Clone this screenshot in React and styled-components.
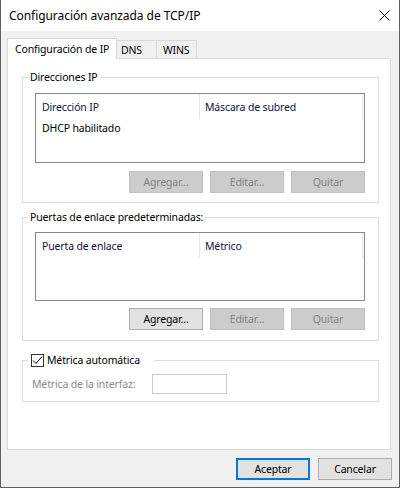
import React from 'react';
import styled, { createGlobalStyle } from 'styled-components';

const Global = createGlobalStyle`
  html, body { margin: 0; padding: 0; background: #f0f0f0; }
  body { font-family: "Noto Sans", Lato, sans-serif; font-size: 10.5px; letter-spacing: -0.15px; color: #000; }
  * { box-sizing: border-box; }
`;

const Window = styled.div`
  width: 400px;
  height: 488px;
  display: flex;
  flex-direction: column;
  border: 1px solid #5f5f5f;
  border-top: none;
  background: #f0f0f0;
`;

const TitleBar = styled.div`
  height: 31px;
  flex: none;
  background: #fff;
  display: flex;
  align-items: center;
  justify-content: space-between;
  padding: 0 9px 0 8px;
`;

const Title = styled.span`
  font-size: 12px;
  letter-spacing: -0.06px;
  line-height: 16px;
`;

const CloseIcon = styled.svg`
  display: block;
  width: 11px;
  height: 11px;
`;

const Body = styled.div`
  flex: 1;
  display: flex;
  flex-direction: column;
  padding: 7px 8px 0 6px;
`;

const TabRow = styled.div`
  display: flex;
  align-items: flex-end;
  height: 21px;
  flex: none;
`;

const Tab = styled.div`
  height: ${p => (p.$active ? 21 : 19)}px;
  width: ${p => p.$w}px;
  border: 1px solid #d9d9d9;
  border-left: ${p => (p.$first ? '1px solid #d9d9d9' : 'none')};
  border-bottom: ${p => (p.$active ? 'none' : '1px solid #d9d9d9')};
  background: ${p => (p.$active ? '#fff' : '#f0f0f0')};
  display: flex;
  align-items: center;
  padding-left: ${p => p.$pl}px;
  line-height: 16px;
  white-space: nowrap;
`;

const TabFiller = styled.div`
  flex: 1;
  height: 1px;
  background: #d9d9d9;
`;

const Panel = styled.div`
  flex: 1;
  background: #fff;
  border: 1px solid #d9d9d9;
  border-top: none;
  padding: 10px 11px 0 14px;
  display: flex;
  flex-direction: column;
`;

const Group = styled.fieldset`
  margin: ${p => p.$mt || 0}px 0 0 0;
  padding: 0;
  border: 1px solid #dcdcdc;
  min-width: 0;
`;

const Legend = styled.legend`
  margin-left: 5px;
  padding: 0 2px;
  line-height: 16px;
  height: 16px;
`;

const CheckLegend = styled.legend`
  margin-left: 5px;
  padding: 0 14px 0 3px;
  line-height: 16px;
  height: 16px;
  display: flex;
  align-items: center;
  gap: 3px;
`;

const CheckBox = styled.span`
  width: 13px;
  height: 13px;
  border: 1px solid #333;
  background: #fff;
  display: flex;
  align-items: center;
  justify-content: center;
`;

const GroupBody = styled.div`
  padding: ${p => p.$pt}px 13px ${p => p.$pb}px 12px;
`;

const ListView = styled.div`
  height: ${p => p.$h}px;
  border: 1px solid #828790;
  background: #fff;
`;

const ListHeader = styled.div`
  display: grid;
  grid-template-columns: 164px 163px 1fr;
  height: 25px;
`;

const HeaderCell = styled.div`
  padding-left: ${p => p.$pl}px;
  border-right: ${p => (p.$last ? 'none' : '1px solid #e5e5e5')};
  display: flex;
  align-items: center;
  color: #10143a;
  white-space: nowrap;
`;

const ListRow = styled.div`
  height: 19px;
  line-height: 19px;
  padding-left: 6px;
`;

const ButtonRow = styled.div`
  display: flex;
  justify-content: flex-end;
  gap: 7px;
  margin-top: ${p => p.$gap}px;
`;

const Button = styled.button`
  width: 74px;
  height: 22px;
  padding: 0;
  font: inherit;
  letter-spacing: inherit;
  background: #e1e1e1;
  color: #000;
  border: 1px solid #adadad;
  &:disabled {
    background: #cccccc;
    border-color: #bfbfbf;
    color: #838383;
  }
`;

const DefaultButton = styled(Button)`
  border: 2px solid #0078d7;
`;

const MetricRow = styled.div`
  display: flex;
  align-items: center;
  padding: 6px 0 7px 9px;
`;

const MetricLabel = styled.span`
  width: 120px;
  color: #8a8a8a;
  white-space: nowrap;
`;

const MetricInput = styled.div`
  width: 75px;
  height: 20px;
  border: 1px solid #cccccc;
  background: #fff;
`;

const Footer = styled.div`
  height: 37px;
  flex: none;
  display: flex;
  justify-content: flex-end;
  align-items: flex-start;
  gap: 8px;
  padding-top: 8px;
  margin-right: -1px;
`;

const AddressList = ({ h, cols, rows }) => (
  <ListView $h={h}>
    <ListHeader>
      <HeaderCell $pl={6}>{cols[0]}</HeaderCell>
      <HeaderCell $pl={5}>{cols[1]}</HeaderCell>
      <HeaderCell $last />
    </ListHeader>
    {rows.map(r => (
      <ListRow key={r}>{r}</ListRow>
    ))}
  </ListView>
);

const Buttons = ({ gap, addEnabled }) => (
  <ButtonRow $gap={gap}>
    <Button disabled={!addEnabled}>Agregar...</Button>
    <Button disabled>Editar...</Button>
    <Button disabled>Quitar</Button>
  </ButtonRow>
);

export default function App() {
  return (
    <>
      <Global />
      <Window>
        <TitleBar>
          <Title>Configuración avanzada de TCP/IP</Title>
          <CloseIcon viewBox="0 0 11 11">
            <path d="M0.5 0.5 L10.5 10.5 M10.5 0.5 L0.5 10.5" stroke="#000" strokeWidth="1" fill="none" />
          </CloseIcon>
        </TitleBar>
        <Body>
          <TabRow>
            <Tab $active $first $w={110} $pl={7}>Configuración de IP</Tab>
            <Tab $w={40} $pl={4}>DNS</Tab>
            <Tab $w={40} $pl={6}>WINS</Tab>
            <TabFiller />
          </TabRow>
          <Panel>
            <Group>
              <Legend>Direcciones IP</Legend>
              <GroupBody $pt={8} $pb={9}>
                <AddressList h={70} cols={['Dirección IP', 'Máscara de subred']} rows={['DHCP habilitado']} />
                <Buttons gap={8} />
              </GroupBody>
            </Group>
            <Group $mt={6}>
              <Legend>Puertas de enlace predeterminadas:</Legend>
              <GroupBody $pt={7} $pb={10}>
                <AddressList h={69} cols={['Puerta de enlace', 'Métrico']} rows={[]} />
                <Buttons gap={7} addEnabled />
              </GroupBody>
            </Group>
            <Group $mt={11}>
              <CheckLegend>
                <CheckBox>
                  <svg width="11" height="11" viewBox="0 0 11 11">
                    <path d="M1 5.5 L4 8.5 L10 1.5" stroke="#000" strokeWidth="1" fill="none" />
                  </svg>
                </CheckBox>
                Métrica automática
              </CheckLegend>
              <MetricRow>
                <MetricLabel>Métrica de la interfaz:</MetricLabel>
                <MetricInput />
              </MetricRow>
            </Group>
          </Panel>
          <Footer>
            <DefaultButton>Aceptar</DefaultButton>
            <Button>Cancelar</Button>
          </Footer>
        </Body>
      </Window>
    </>
  );
}
